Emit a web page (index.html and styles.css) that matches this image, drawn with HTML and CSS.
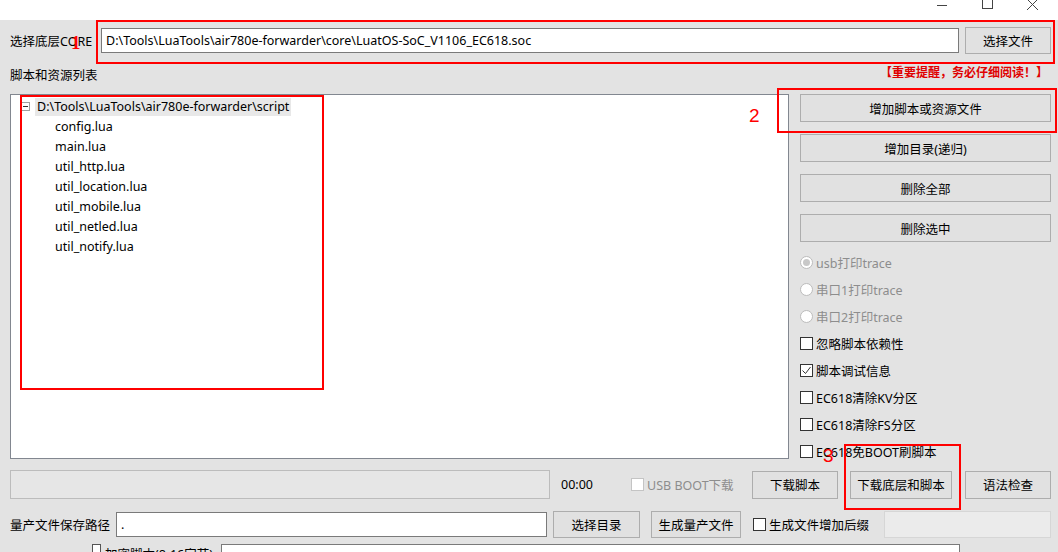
FILE: index.html
```html
<!DOCTYPE html>
<html lang="zh-CN">
<head>
  <meta charset="UTF-8">
  <title>LuaTools 下载</title>
  <link rel="stylesheet" href="styles.css">
</head>
<body>
<div class="window">

  <!-- title bar (top clipped) -->
  <div class="titlebar">
    <span class="tb-btn"><svg width="12" height="12" viewBox="0 0 12 12"><path d="M1 5.5h10" stroke="#444" fill="none"/></svg></span>
    <span class="tb-btn"><svg width="12" height="12" viewBox="0 0 12 12"><rect x="1.5" y="-1.5" width="10" height="10" stroke="#444" fill="none"/></svg></span>
    <span class="tb-btn"><svg width="14" height="12" viewBox="0 0 14 12"><path d="M1 -1l11 11M12 -1L1 10" stroke="#444" fill="none"/></svg></span>
  </div>

  <!-- core file -->
  <div class="row row-core">
    <label class="lbl lbl-core">选择底层CORE</label>
    <input class="field field-core" type="text" value="D:\Tools\LuaTools\air780e-forwarder\core\LuatOS-SoC_V1106_EC618.soc">
    <button class="btn btn-file">选择文件</button>
  </div>

  <div class="row row-head">
    <span class="lbl">脚本和资源列表</span>
    <span class="warn">【重要提醒，务必仔细阅读！】</span>
  </div>

  <!-- list + side panel -->
  <div class="content">
    <div class="tree">
      <div class="node root"><span class="toggle"></span><span class="node-text">D:\Tools\LuaTools\air780e-forwarder\script</span></div>
      <div class="node leaf">config.lua</div>
      <div class="node leaf">main.lua</div>
      <div class="node leaf">util_http.lua</div>
      <div class="node leaf">util_location.lua</div>
      <div class="node leaf">util_mobile.lua</div>
      <div class="node leaf">util_netled.lua</div>
      <div class="node leaf">util_notify.lua</div>
    </div>

    <div class="side">
      <button class="btn side-btn">增加脚本或资源文件</button>
      <button class="btn side-btn">增加目录(递归)</button>
      <button class="btn side-btn">删除全部</button>
      <button class="btn side-btn">删除选中</button>

      <div class="opts">
        <div class="opt disabled"><span class="radio checked"></span>usb打印trace</div>
        <div class="opt disabled"><span class="radio"></span>串口1打印trace</div>
        <div class="opt disabled"><span class="radio"></span>串口2打印trace</div>
        <div class="opt"><span class="check"></span>忽略脚本依赖性</div>
        <div class="opt"><span class="check on"><svg width="11" height="11" viewBox="0 0 11 11"><path d="M1.5 5.5l3 3 5-6.5" stroke="#333" fill="none"/></svg></span>脚本调试信息</div>
        <div class="opt"><span class="check"></span>EC618清除KV分区</div>
        <div class="opt"><span class="check"></span>EC618清除FS分区</div>
        <div class="opt"><span class="check"></span>EC618免BOOT刷脚本</div>
      </div>
    </div>
  </div>

  <!-- download row -->
  <div class="row row-dl">
    <div class="progress"></div>
    <span class="timer">00:00</span>
    <span class="opt disabled usbboot"><span class="check dim"></span>USB BOOT下载</span>
    <button class="btn btn-dl">下载脚本</button>
    <button class="btn btn-dl2">下载底层和脚本</button>
    <button class="btn btn-chk">语法检查</button>
  </div>

  <!-- mass production row -->
  <div class="row row-mp">
    <span class="lbl lbl-mp">量产文件保存路径</span>
    <input class="field field-mp" type="text" value=".">
    <button class="btn btn-dir">选择目录</button>
    <button class="btn btn-gen">生成量产文件</button>
    <span class="opt suffix"><span class="check"></span>生成文件增加后缀</span>
    <div class="field field-off"></div>
  </div>

  <div class="row row-enc">
    <span class="check small"></span>
    <span class="lbl">加密脚本(8-16字节)</span>
    <div class="field field-enc"></div>
  </div>

  <!-- annotation marks -->
  <div class="mark box1"></div><span class="num n1">1</span>
  <div class="mark box-tree"></div>
  <div class="mark box2"></div><span class="num n2">2</span>
  <div class="mark box3"></div><span class="num n3">3</span>
</div>
</body>
</html>
```

FILE: styles.css
```css
* { box-sizing: border-box; margin: 0; padding: 0; }
body {
  font-family: "Noto Sans", "Noto Sans CJK SC", sans-serif;
  font-size: 12.5px;
  color: #000;
  background: #e3e3e3;
}

.window {
  position: relative;
  width: 1058px;
  height: 552px;
  overflow: hidden;
  background: #e3e3e3;
}

/* ——— title bar ——— */
.titlebar {
  height: 20px;
  background: #fff;
  display: flex;
  justify-content: flex-end;
  align-items: flex-start;
  padding-right: 18px;
  gap: 31px;
}
.tb-btn { width: 14px; height: 12px; display: flex; }

/* ——— generic ——— */
.row { display: flex; align-items: center; padding-left: 10px; }
.lbl { white-space: nowrap; }
.btn {
  font: inherit;
  background: #e1e1e1;
  border: 1px solid #adadad;
  color: #000;
  height: 28px;
}
.field {
  font: inherit;
  background: #fff;
  border: 1px solid #7a7a7a;
  height: 25px;
  padding: 0 4px;
  outline: none;
}

/* ——— core row ——— */
.row-core { margin-top: 7px; height: 27px; }
.lbl-core { width: 91px; }
.field-core { width: 858px; }
.btn-file { width: 86px; height: 27px; margin-left: 6px; }

.row-head {
  height: 26px;
  margin-top: 7px;
  justify-content: space-between;
  padding-right: 10px;
}
.warn { color: #e00000; font-weight: 700; font-size: 12px; margin-top: -4px; }

/* ——— list + side ——— */
.content {
  display: flex;
  align-items: flex-start;
  height: 365px;
  padding-left: 10px;
  margin-top: 7px;
}
.tree {
  width: 779px;
  height: 365px;
  background: #fff;
  border: 1px solid #828790;
  padding-top: 2px;
}
.node { height: 20px; line-height: 20px; white-space: nowrap; }
.root { display: flex; align-items: center; padding-left: 10px; height: 19px; }
.toggle {
  width: 9px; height: 9px;
  border: 1px solid #a0a0a0;
  margin-right: 5px;
  position: relative;
}
.toggle::after {
  content: "";
  position: absolute;
  left: 1px; right: 1px; top: 3px;
  height: 1px;
  background: #333;
}
.node-text { background: #e8e8e8; padding: 0 2px; line-height: 18px; }
.leaf { padding-left: 44px; }
.root + .leaf { margin-top: 1px; }

.side {
  width: 251px;
  margin-left: 11px;
  display: flex;
  flex-direction: column;
  gap: 12px;
}
.side-btn { height: 28px; }
.opts { display: flex; flex-direction: column; margin-top: -5px; }
.opt { display: flex; align-items: center; height: 27px; white-space: nowrap; }
.opt.disabled { color: #8d8d8d; }
.radio {
  width: 13px; height: 13px;
  border-radius: 50%;
  border: 1px solid #bcbcbc;
  background: #fff;
  margin-right: 3px;
  position: relative;
}
.radio.checked::after {
  content: "";
  position: absolute;
  left: 2px; top: 2px;
  width: 7px; height: 7px;
  border-radius: 50%;
  background: #c8c8c8;
}
.check {
  width: 13px; height: 13px;
  border: 1px solid #333;
  background: #fff;
  margin-right: 3px;
  display: flex;
  align-items: center;
  justify-content: center;
}
.check.dim { border-color: #c4c4c4; }

/* ——— download row ——— */
.row-dl { margin-top: 11px; height: 29px; }
.progress {
  width: 540px; height: 29px;
  border: 1px solid #bcbcbc;
  background: #e6e6e6;
}
.timer { margin-left: 11px; width: 70px; }
.usbboot { width: 121px; }
.btn-dl { width: 86px; }
.btn-dl2 { width: 102px; margin-left: 12px; }
.btn-chk { width: 86px; margin-left: 13px; }

/* ——— mass production row ——— */
.row-mp { margin-top: 12px; height: 27px; }
.lbl-mp { width: 106px; }
.field-mp { width: 431px; }
.btn-dir { width: 87px; height: 27px; margin-left: 6px; }
.btn-gen { width: 90px; height: 27px; margin-left: 11px; }
.suffix { margin-left: 12px; width: 131px; }
.field-off { width: 167px; height: 27px; background: #ebebeb; border-color: #d6d6d6; }

.row-enc { margin-top: 6px; padding-left: 92px; align-items: flex-start; }
.check.small { width: 9px; height: 9px; border-color: #555; margin-right: 4px; }
.field-enc { width: 739px; height: 20px; margin-left: 8px; border-color: #7a7a7a; }

/* ——— annotation overlay ——— */
.mark { position: absolute; border: 2px solid #f00; }
.box1 { left: 96px; top: 20px; width: 959px; height: 44px; }
.box-tree { left: 20px; top: 95px; width: 304px; height: 295px; }
.box2 { left: 777px; top: 88px; width: 280px; height: 45px; }
.box3 { left: 844px; top: 444px; width: 117px; height: 66px; }
.num {
  position: absolute;
  color: #f00;
  font-family: "Liberation Sans", sans-serif;
  font-size: 19px;
  line-height: 1;
}
.n1 { left: 71px; top: 33px; font-family: "Liberation Serif", serif; font-weight: 700; }
.n2 { left: 749px; top: 106px; }
.n3 { left: 823px; top: 446px; }
```
